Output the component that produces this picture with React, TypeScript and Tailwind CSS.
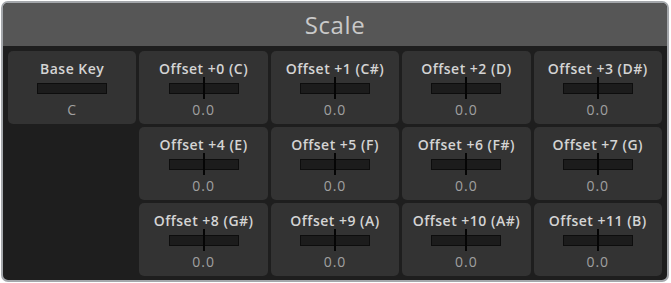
const notes = ["C", "C#", "D", "D#", "E", "F", "F#", "G", "G#", "A", "A#", "B"];

function Track({ tick }: { tick: boolean }) {
  return (
    <div className="relative mt-[-2px] flex h-[22px] w-full items-center justify-center">
      <div className="h-[11px] w-[70px] border border-[#0d0d0d] bg-[#1c1c1c]" />
      {tick && (
        <div className="absolute left-1/2 top-0 h-[22px] w-[2px] -translate-x-1/2 bg-[#050505]" />
      )}
    </div>
  );
}

function Cell({ label, value, tick = true }: { label: string; value: string; tick?: boolean }) {
  return (
    <div className="flex h-[73px] flex-col items-center rounded-[5px] bg-[#333333] pt-[8px]">
      <div className="text-[14px] font-semibold leading-[20px] tracking-[0.5px] text-[#d4d4d4]">{label}</div>
      <Track tick={tick} />
      <div className="mt-[1px] text-[14px] leading-[20px] tracking-[1px] text-[#a0a0a0]">{value}</div>
    </div>
  );
}

function App() {
  return (
    <div className="h-[283px] w-[671px] bg-white p-[1px] font-['Open_Sans',sans-serif]">
      <div className="flex h-[281px] w-[668px] flex-col overflow-hidden rounded-[7px] border-2 border-[#a4a7ab] bg-[#1e1e1e]">
        <div className="flex h-[43px] shrink-0 items-center justify-center bg-[#565656] text-[24px] leading-none tracking-[0.6px] text-[#c9c9c9]">
          Scale
        </div>
        <div className="grid grid-cols-5 gap-[3px] pb-[3px] pl-[5px] pr-[5px] pt-[5px]">
          <Cell label="Base Key" value="C" tick={false} />
          {notes.slice(0, 4).map((n, i) => (
            <Cell key={n} label={`Offset +${i} (${n})`} value="0.0" />
          ))}
          <div />
          {notes.slice(4, 8).map((n, i) => (
            <Cell key={n} label={`Offset +${i + 4} (${n})`} value="0.0" />
          ))}
          <div />
          {notes.slice(8).map((n, i) => (
            <Cell key={n} label={`Offset +${i + 8} (${n})`} value="0.0" />
          ))}
        </div>
      </div>
    </div>
  );
}

export default App;
